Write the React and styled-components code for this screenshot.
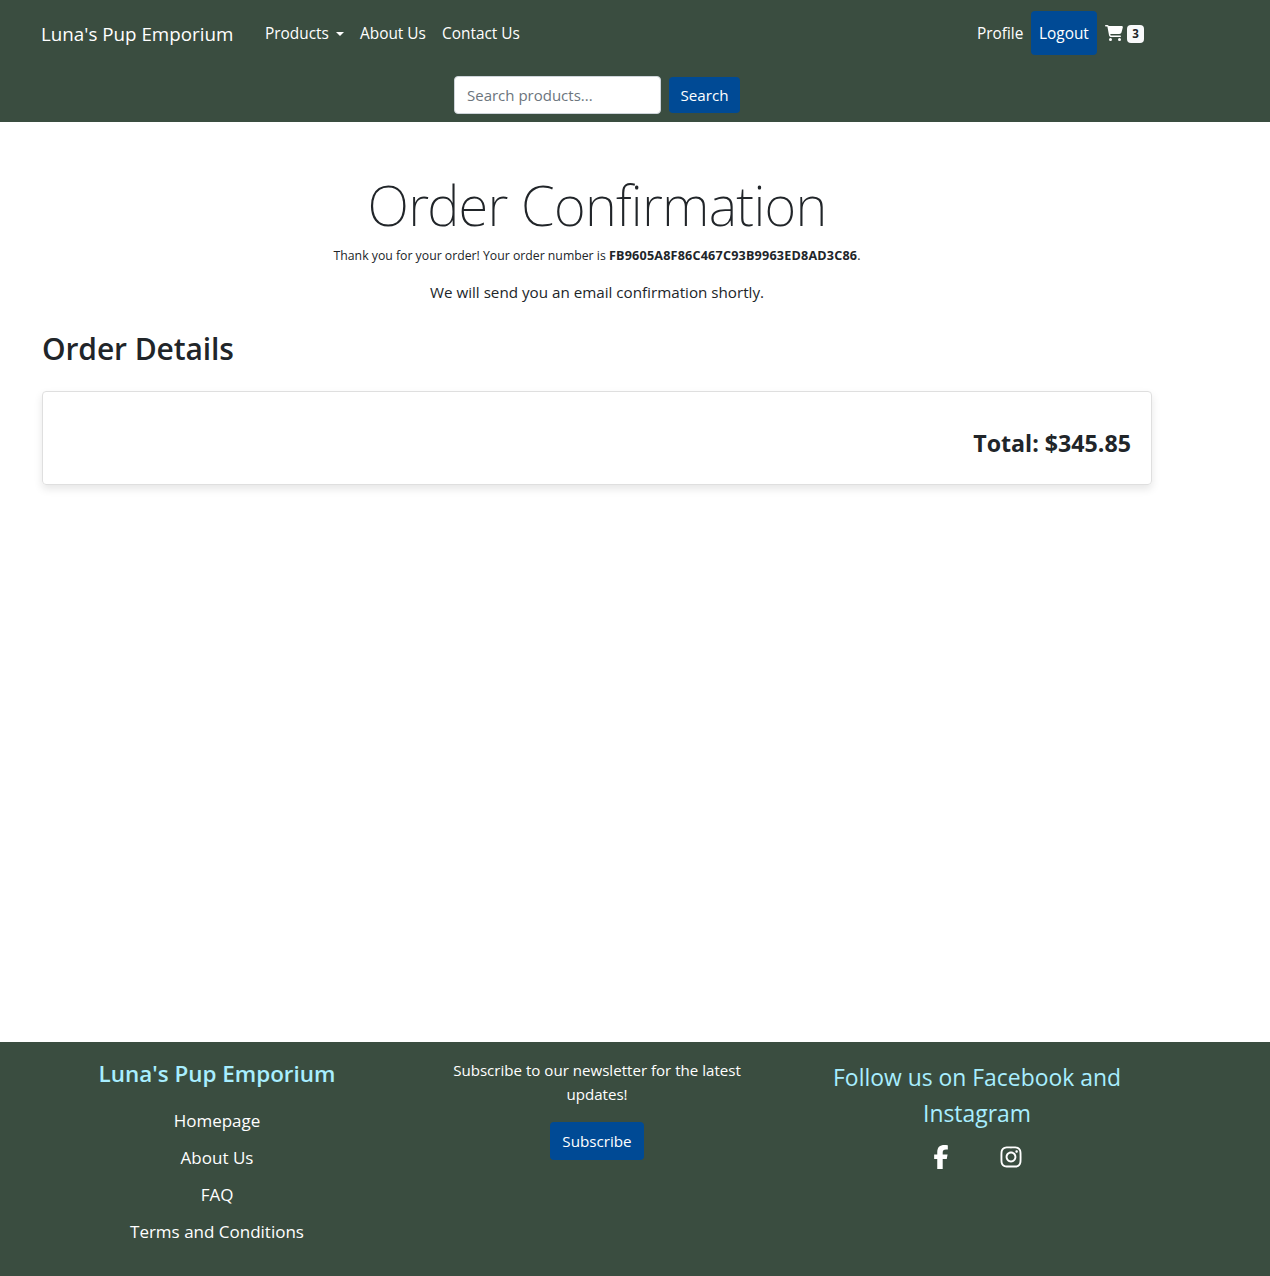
import React from "react";
import styled, { createGlobalStyle } from "styled-components";
import { FaCartShopping, FaFacebookF, FaInstagram } from "react-icons/fa6";

const colors = {
  green: "#3a4d40",
  blue: "#004a95",
  ink: "#212529",
  sky: "#a8eeff",
  white: "#ffffff",
};

const GlobalStyle = createGlobalStyle`
  *, *::before, *::after { box-sizing: border-box; }
  body {
    margin: 0;
    background: #fff;
    color: ${colors.ink};
    font-family: "Open Sans", "Noto Sans", sans-serif;
    font-size: 15.2px;
    line-height: 24px;
  }
  a { color: inherit; text-decoration: none; }
  h1, h2, h3, p, ul { margin: 0; padding: 0; }
  ul { list-style: none; }
`;

const Page = styled.div`
  display: flex;
  flex-direction: column;
  min-height: 1276px;
`;

const Container = styled.div`
  width: 1110px;
  margin-left: 42px;
`;

const Header = styled.header`
  height: 122px;
  padding-top: 11px;
  background: ${colors.green};
  color: ${colors.white};
`;

const NavRow = styled(Container)`
  display: flex;
  align-items: center;
  height: 44px;
`;

const Brand = styled.a`
  width: 216px;
  padding-top: 2px;
  font-size: 18.8px;
  line-height: 30px;
  white-space: nowrap;
  margin-left: -1px;
`;

const NavLink = styled.a`
  display: flex;
  align-items: center;
  width: ${(p) => p.$width}px;
  height: 44px;
  padding: 2px 8px 0;
  font-size: 15.4px;
  white-space: nowrap;
  border-radius: 4px;
  background: ${(p) => (p.$filled ? colors.blue : "transparent")};
`;

const Caret = styled.span`
  margin: -1px 0 0 7px;
  border-top: 4px solid;
  border-left: 4px solid transparent;
  border-right: 4px solid transparent;
`;

const Spacer = styled.div`
  flex: 1;
`;

const CartLink = styled.a`
  display: flex;
  align-items: flex-start;
  gap: 4px;
  padding: 1px 8px 0;
  height: 19px;
`;

const CartIcon = styled(FaCartShopping)`
  width: 18px;
  height: 16px;
`;

const Badge = styled.span`
  width: 17px;
  height: 18px;
  border-radius: 4px;
  background: #f8f9fa;
  color: ${colors.ink};
  font-size: 11.5px;
  font-weight: 700;
  line-height: 18px;
  text-align: center;
`;

const SearchForm = styled.form`
  display: flex;
  align-items: center;
  justify-content: center;
  gap: 8px;
  width: 1110px;
  margin: 21px 0 0 42px;
`;

const SearchInput = styled.input`
  width: 207px;
  height: 38px;
  padding: 0 12px;
  border: 1px solid #ced4da;
  border-radius: 4px;
  background: #fff;
  color: ${colors.ink};
  font: inherit;
  font-size: 15px;
  &::placeholder { color: #6c757d; opacity: 1; }
`;

const Button = styled.button`
  width: ${(p) => p.$width}px;
  height: ${(p) => p.$height}px;
  padding: 0;
  border: 0;
  border-radius: 4px;
  background: ${colors.blue};
  color: ${colors.white};
  font: inherit;
`;

const Main = styled(Container)`
  flex: 1;
  padding-top: 47px;
`;

const Intro = styled.div`
  display: flex;
  flex-direction: column;
  align-items: center;
`;

const Title = styled.h1`
  font-family: "Noto Sans", "Open Sans", sans-serif;
  font-size: 54.5px;
  font-weight: 200;
  line-height: 72px;
  letter-spacing: -0.75px;
`;

const Thanks = styled.p`
  margin-top: 5px;
  font-size: 12.25px;
  line-height: 20px;
  white-space: pre;
`;

const OrderNumber = styled.strong`
  font-size: 12.6px;
  font-weight: 700;
  letter-spacing: 0.2px;
`;

const Notice = styled.p`
  margin-top: 14px;
`;

const SectionTitle = styled.h2`
  margin-top: 25px;
  font-size: 30px;
  font-weight: 600;
  line-height: 40px;
  letter-spacing: -0.1px;
`;

const Card = styled.section`
  display: flex;
  justify-content: flex-end;
  height: 94px;
  margin-top: 22px;
  padding: 37px 20px 0 0;
  border: 1px solid #dfdfdf;
  border-radius: 4px;
  box-shadow: 0 4px 8px rgba(0, 0, 0, 0.1);
`;

const Total = styled.h3`
  font-size: 23.2px;
  font-weight: 700;
  line-height: 28px;
`;

const Footer = styled.footer`
  display: grid;
  grid-template-columns: repeat(3, 380px);
  height: 234px;
  padding-left: 27px;
  background: ${colors.green};
  color: ${colors.white};
  text-align: center;
`;

const Column = styled.div`
  display: flex;
  flex-direction: column;
  align-items: center;
  padding: 16px 36px 0;
`;

const FooterTitle = styled.h3`
  color: ${colors.sky};
  font-size: 22.45px;
  font-weight: 600;
  line-height: 32px;
`;

const FooterLinks = styled.ul`
  margin-top: 12px;
  font-size: 17px;
  line-height: 37px;
`;

const Newsletter = styled.p`
  width: 300px;
  margin-bottom: 16px;
  font-size: 15.1px;
`;

const Follow = styled.p`
  width: 310px;
  color: ${colors.sky};
  font-size: 22.9px;
  line-height: 36px;
  margin-top: 2px;
`;

const Social = styled.div`
  display: flex;
  align-items: center;
  gap: 46px;
  height: 24px;
  margin: 13px 3px 0 0;
`;

const footerLinks = ["Homepage", "About Us", "FAQ", "Terms and Conditions"];

export default function App() {
  return (
    <Page>
      <GlobalStyle />
      <Header>
        <NavRow as="nav">
          <Brand href="#">Luna's Pup Emporium</Brand>
          <NavLink href="#" $width={95}>Products<Caret /></NavLink>
          <NavLink href="#" $width={82}>About Us</NavLink>
          <NavLink href="#" $width={94}>Contact Us</NavLink>
          <Spacer />
          <NavLink href="#" $width={62}>Profile</NavLink>
          <NavLink href="#" $width={66} $filled>Logout</NavLink>
          <CartLink href="#">
            <CartIcon />
            <Badge>3</Badge>
          </CartLink>
        </NavRow>
        <SearchForm>
          <SearchInput placeholder="Search products..." />
          <Button type="button" $width={71} $height={36}>Search</Button>
        </SearchForm>
      </Header>

      <Main as="main">
        <Intro>
          <Title>Order Confirmation</Title>
          <Thanks>
            Thank you for your order! Your order number is <OrderNumber>FB9605A8F86C467C93B9963ED8AD3C86</OrderNumber>.
          </Thanks>
          <Notice>We will send you an email confirmation shortly.</Notice>
        </Intro>
        <SectionTitle>Order Details</SectionTitle>
        <Card>
          <Total>Total: $345.85</Total>
        </Card>
      </Main>

      <Footer>
        <Column>
          <FooterTitle>Luna's Pup Emporium</FooterTitle>
          <FooterLinks>
            {footerLinks.map((label) => (
              <li key={label}><a href="#">{label}</a></li>
            ))}
          </FooterLinks>
        </Column>
        <Column>
          <Newsletter>Subscribe to our newsletter for the latest updates!</Newsletter>
          <Button type="button" $width={94} $height={38}>Subscribe</Button>
        </Column>
        <Column>
          <Follow>Follow us on Facebook and Instagram</Follow>
          <Social>
            <FaFacebookF size={24} />
            <FaInstagram size={24} />
          </Social>
        </Column>
      </Footer>
    </Page>
  );
}
